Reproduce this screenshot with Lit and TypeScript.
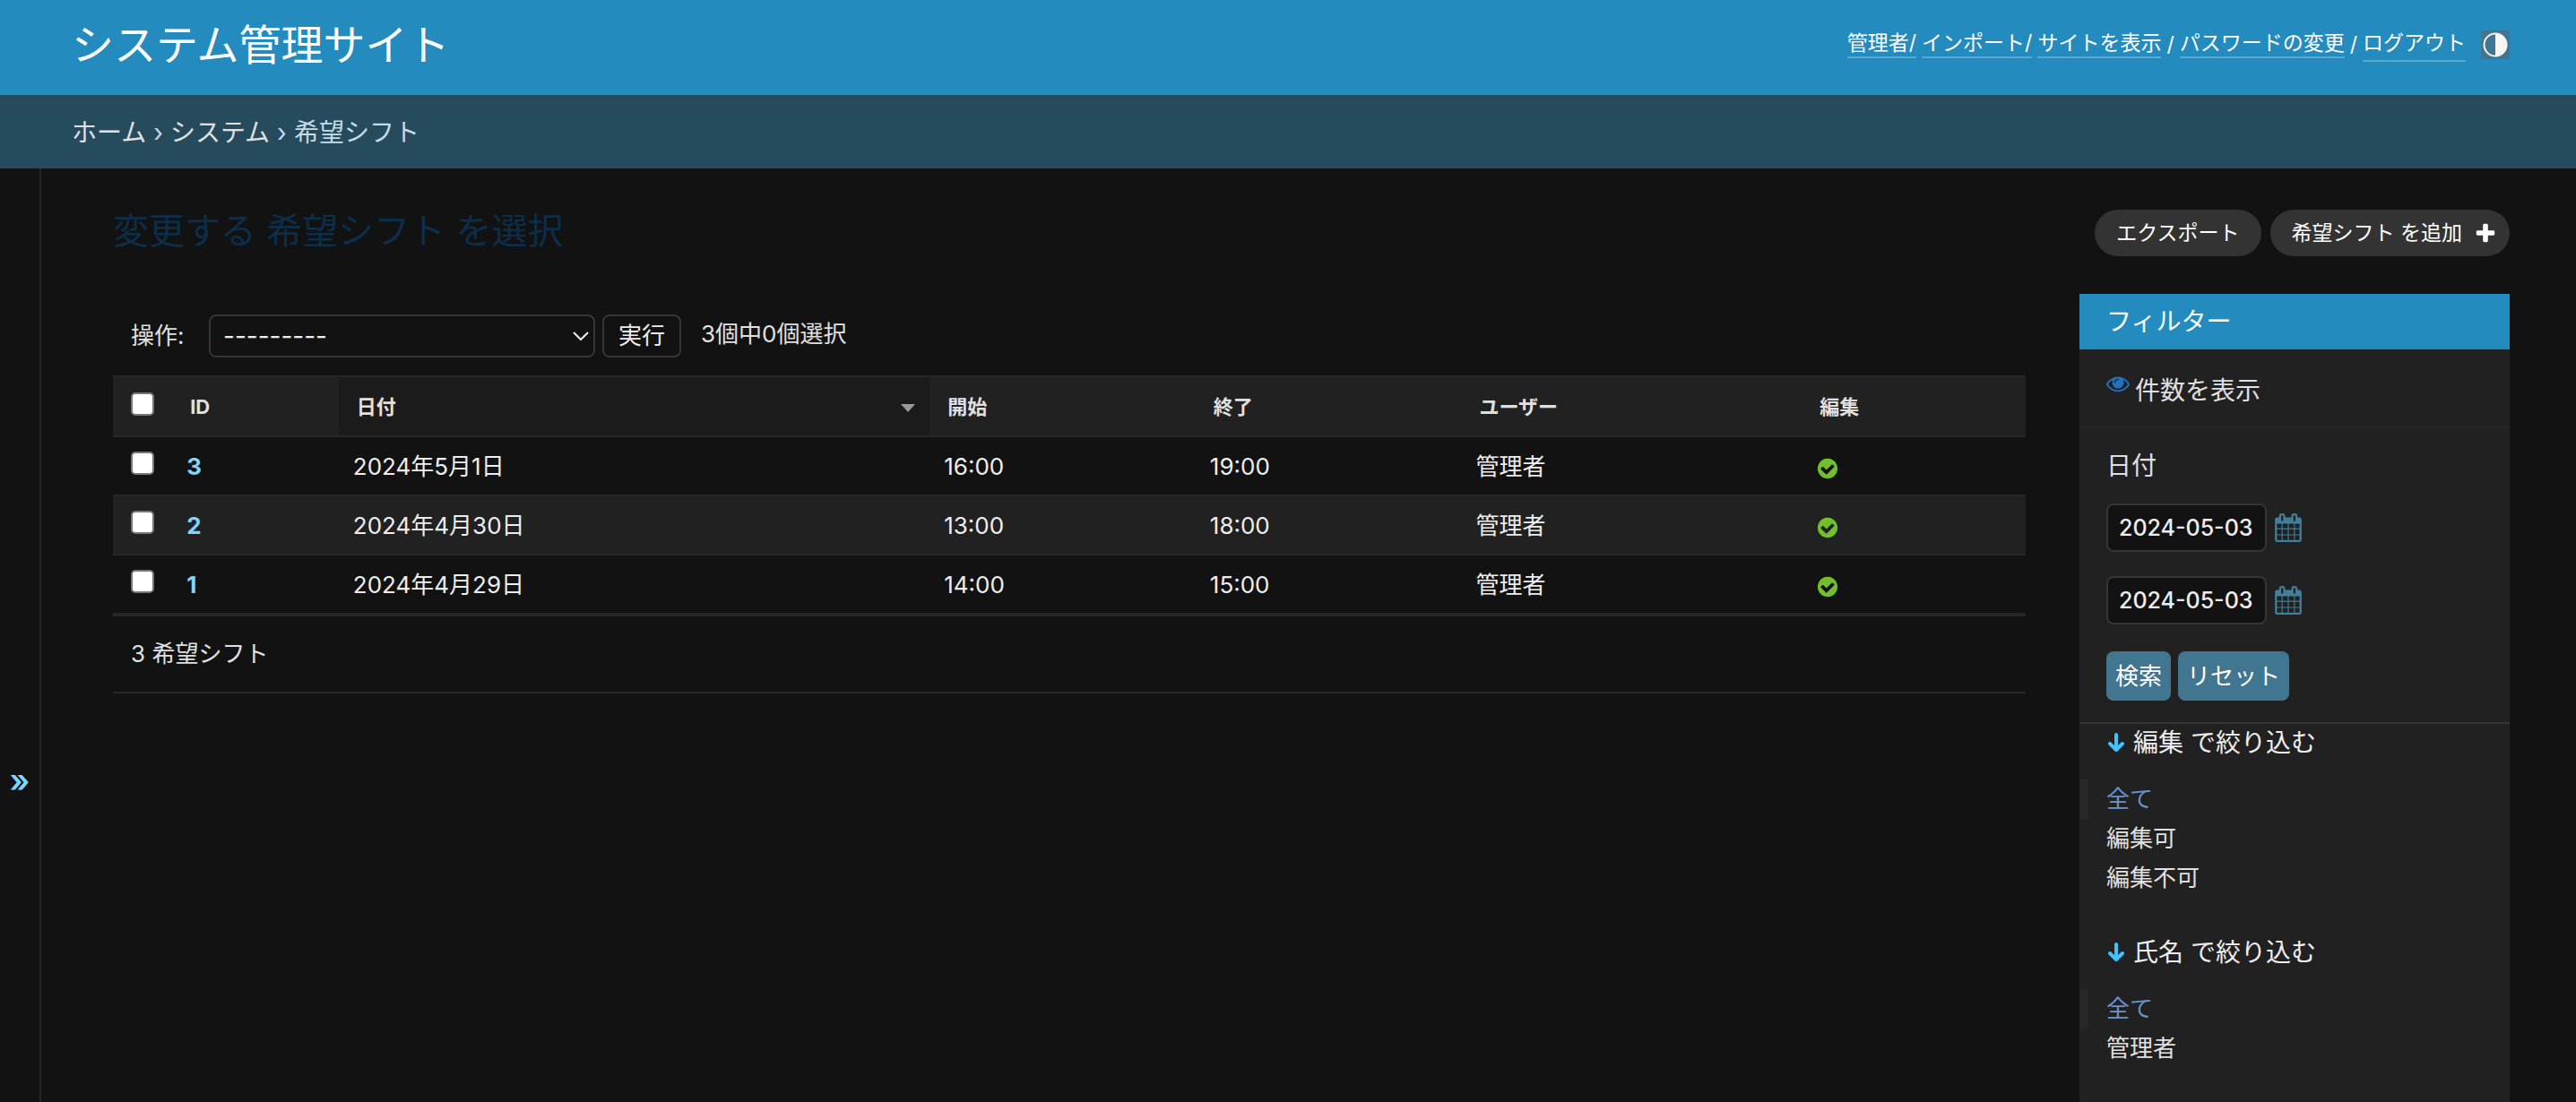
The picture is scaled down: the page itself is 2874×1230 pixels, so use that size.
import { LitElement, html, css, svg } from "lit";
import { customElement, property, state } from "lit/decorators.js";
import { classMap } from "lit/directives/class-map.js";

const ICONS = {
  calendar:
    "M192 1664h288v-288h-288v288zm352 0h320v-288h-320v288zm-352-352h288v-320h-288v320zm352 0h320v-320h-320v320zm-352-384h288v-288h-288v288zm736 736h320v-288h-320v288zm-384-736h320v-288h-320v288zm768 736h288v-288h-288v288zm-384-352h320v-320h-320v320zm-352-864v-288q0-13-9.5-22.5t-22.5-9.5h-64q-13 0-22.5 9.5t-9.5 22.5v288q0 13 9.5 22.5t22.5 9.5h64q13 0 22.5-9.5t9.5-22.5zm736 864h288v-320h-288v320zm-384-384h320v-288h-320v288zm384 0h288v-288h-288v288zm32-480v-288q0-13-9.5-22.5t-22.5-9.5h-64q-13 0-22.5 9.5t-9.5 22.5v288q0 13 9.5 22.5t22.5 9.5h64q13 0 22.5-9.5t9.5-22.5zm384-64v1280q0 52-38 90t-90 38h-1408q-52 0-90-38t-38-90v-1280q0-52 38-90t90-38h128v-96q0-66 47-113t113-47h64q66 0 113 47t47 113v96h384v-96q0-66 47-113t113-47h64q66 0 113 47t47 113v96h128q52 0 90 38t38 90z",
  check:
    "M1412 734q0-28-18-46l-91-90q-19-19-45-19t-45 19l-408 407-226-226q-19-19-45-19t-45 19l-91 90q-18 18-18 46 0 27 18 45l362 362q19 19 45 19 27 0 46-19l543-543q18-18 18-45zm252 162q0 209-103 385.5t-279.5 279.5-385.5 103-385.5-103-279.5-279.5-103-385.5 103-385.5 279.5-279.5 385.5-103 385.5 103 279.5 279.5 103 385.5z",
  plus: "M1600 796v192q0 40-28 68t-68 28h-416v416q0 40-28 68t-68 28h-192q-40 0-68-28t-28-68v-416h-416q-40 0-68-28t-28-68v-192q0-40 28-68t68-28h416v-416q0-40 28-68t68-28h192q40 0 68 28t28 68v416h416q40 0 68 28t28 68z",
  eye: "M1664 960q-152-236-381-353 61 104 61 225 0 185-131.5 316.5t-316.5 131.5-316.5-131.5-131.5-316.5q0-121 61-225-229 117-381 353 133 205 333.5 326.5t434.5 121.5 434.5-121.5 333.5-326.5zm-720-384q0-20-14-34t-34-14q-125 0-214.5 89.5t-89.5 214.5q0 20 14 34t34 14 34-14 14-34q0-86 61-147t147-61q20 0 34-14t14-34zm848 384q0 34-20 69-140 230-376.5 368.5t-499.5 138.5-499.5-139-376.5-368q-20-35-20-69t20-69q140-229 376.5-368t499.5-139 499.5 139 376.5 368q20 35 20 69z",
};

const icon = (name: keyof typeof ICONS, viewBox = "0 0 1792 1792") =>
  html`<svg class="icon ${name}" viewBox=${viewBox} aria-hidden="true">${svg`<path d=${ICONS[name]} />`}</svg>`;

const base = css`
  *,
  *::before,
  *::after {
    box-sizing: border-box;
  }
  a {
    color: inherit;
    text-decoration: none;
  }
  h1,
  h2,
  p,
  ul,
  ol {
    margin: 0;
    padding: 0;
    font-weight: 400;
    list-style: none;
  }
  button,
  input,
  select {
    margin: 0;
    font: inherit;
    color: inherit;
  }
  button {
    cursor: pointer;
  }
  .icon {
    display: block;
    fill: currentColor;
    flex: none;
  }
`;

@customElement("site-header")
export class SiteHeader extends LitElement {
  static styles = [
    base,
    css`
      :host {
        display: flex;
        align-items: center;
        justify-content: space-between;
        height: 106px;
        padding: 0 74px 6px 80px;
        background: #248bbf;
        color: #fff;
      }
      .title {
        font-size: 47px;
        line-height: 60px;
      }
      .tools {
        display: flex;
        align-items: center;
        gap: 6px;
        font-size: 23px;
        line-height: 26px;
      }
      .link {
        border-bottom: 2px solid #5aa8d0;
        padding-bottom: 2px;
      }
      .logout {
        border: 0;
        border-bottom: 2px solid #5aa8d0;
        background: none;
        padding: 4px 0 6px;
      }
      .theme {
        width: 32px;
        height: 32px;
        margin-left: 11px;
        padding: 2px;
        border: 0;
        background: #417690;
      }
      .theme-icon {
        display: block;
        width: 28px;
        height: 28px;
      }
    `,
  ];
  render() {
    return html`
      <h1 class="title"><a href="#">システム管理サイト</a></h1>
      <nav class="tools">
        <a class="link" href="#">管理者/</a>
        <a class="link" href="#">インポート/</a>
        <a class="link" href="#">サイトを表示</a>
        <span>/</span>
        <a class="link" href="#">パスワードの変更</a>
        <span>/</span>
        <button class="logout">ログアウト</button>
        <button class="theme" aria-label="テーマ">
          <svg class="theme-icon" viewBox="0 0 28 28">
            <circle cx="14" cy="14" r="12.5" fill="none" stroke="#f5f5f5" stroke-width="2" />
            <path d="M14 1a13 13 0 0 1 0 26z" fill="#f5f5f5" />
          </svg>
        </button>
      </nav>
    `;
  }
}

interface Shift {
  id: number;
  date: string;
  start: string;
  end: string;
  user: string;
}

@customElement("shift-list")
export class ShiftList extends LitElement {
  @property({ attribute: false }) shifts: Shift[] = [];
  @state() private selected = new Set<number>();

  static styles = [
    base,
    css`
      :host {
        display: block;
      }
      .actions {
        display: flex;
        align-items: center;
        gap: 8px;
        height: 48px;
        margin: 23px 0 20px;
        padding-left: 20px;
        line-height: 40px;
      }
      .label {
        width: 79px;
      }
      .select-box {
        display: grid;
        align-items: center;
        width: 431px;
      }
      .select,
      .chevron {
        grid-area: 1 / 1;
      }
      .select {
        width: 100%;
        height: 48px;
        padding: 0 14px;
        appearance: none;
        border: 2px solid #353535;
        border-radius: 8px;
        background: #121212;
        color: #eee;
        font-size: 28px;
      }
      .chevron {
        justify-self: end;
        width: 18px;
        height: 12px;
        margin-right: 7px;
        pointer-events: none;
        fill: none;
        stroke: #eee;
        stroke-width: 2;
      }
      .run {
        height: 48px;
        padding: 0 16px;
        border: 2px solid #353535;
        border-radius: 8px;
        background: #121212;
        color: #eee;
      }
      .counter {
        padding: 0 14px 4px;
      }
      .table {
        width: 100%;
        table-layout: fixed;
        border-collapse: separate;
        border-spacing: 0;
      }
      .c-check {
        width: 3.1%;
      }
      .c-id {
        width: 8.7%;
      }
      .c-date {
        width: 30.9%;
      }
      .c-time {
        width: 13.9%;
      }
      .c-user {
        width: 17.8%;
      }
      .head,
      .cell {
        padding: 0 16px;
        border-bottom: 2px solid #272727;
        text-align: left;
        vertical-align: middle;
        font-weight: 400;
      }
      .head {
        height: 69px;
        padding: 0 20px;
        border-top: 2px solid #272727;
        background: #212121;
        font-size: 22px;
        font-weight: 700;
        color: #e0e0e0;
      }
      .sorted {
        background: #1b1b1b;
        padding-right: 16px;
      }
      .sort {
        display: flex;
        align-items: center;
        justify-content: space-between;
      }
      .arrow {
        width: 16px;
        height: 9px;
        margin-top: 4px;
        fill: #999;
      }
      .cell {
        height: 66px;
        padding-top: 2px;
        color: #eee;
        line-height: 40px;
      }
      .cell.pick,
      .head.pick {
        padding: 0 0 6px 20px;
      }
      .row:nth-child(even) .cell {
        background: #212121;
      }
      .id {
        font-weight: 700;
        color: #81d4fa;
      }
      .box {
        display: block;
        width: 26px;
        height: 26px;
        appearance: none;
        border: 2px solid #767676;
        border-radius: 5px;
        background: #fff;
      }
      .box:checked {
        background: #248bbf;
      }
      .check {
        width: 26px;
        height: 26px;
        margin-top: 4px;
        fill: #70bf2b;
      }
      .paginator {
        height: 88px;
        padding: 0 20px;
        border-top: 2px solid #272727;
        border-bottom: 2px solid #272727;
        line-height: 84px;
      }
    `,
  ];

  private toggle(id: number) {
    const next = new Set(this.selected);
    if (!next.delete(id)) next.add(id);
    this.selected = next;
  }

  private toggleAll(e: Event) {
    const on = (e.target as HTMLInputElement).checked;
    this.selected = new Set(on ? this.shifts.map((s) => s.id) : []);
  }

  render() {
    return html`
      <div class="actions">
        <label class="label" for="action">操作:</label>
        <div class="select-box">
          <select class="select" id="action">
            <option>---------</option>
          </select>
          <svg class="chevron" viewBox="0 0 18 12"><path d="M1 2l8 8 8-8" /></svg>
        </div>
        <button class="run">実行</button>
        <span class="counter">${this.shifts.length}個中${this.selected.size}個選択</span>
      </div>
      <table class="table">
        <colgroup>
          <col class="c-check" />
          <col class="c-id" />
          <col class="c-date" />
          <col class="c-time" />
          <col class="c-time" />
          <col class="c-user" />
          <col />
        </colgroup>
        <thead>
          <tr>
            <th class="head pick">
              <input class="box" type="checkbox" aria-label="全て選択" @change=${this.toggleAll} />
            </th>
            <th class="head"><a href="#">ID</a></th>
            <th class="head sorted">
              <a class="sort" href="#"
                >日付<svg class="arrow" viewBox="0 0 16 9"><path d="M0 0h16l-8 9z" /></svg
              ></a>
            </th>
            <th class="head"><a href="#">開始</a></th>
            <th class="head"><a href="#">終了</a></th>
            <th class="head"><a href="#">ユーザー</a></th>
            <th class="head"><a href="#">編集</a></th>
          </tr>
        </thead>
        <tbody>
          ${this.shifts.map(
            (s) => html`<tr class="row">
              <td class="cell pick">
                <input
                  class="box"
                  type="checkbox"
                  aria-label=${s.id}
                  .checked=${this.selected.has(s.id)}
                  @change=${() => this.toggle(s.id)}
                />
              </td>
              <th class="cell"><a class="id" href="#">${s.id}</a></th>
              <td class="cell">${s.date}</td>
              <td class="cell">${s.start}</td>
              <td class="cell">${s.end}</td>
              <td class="cell">${s.user}</td>
              <td class="cell">${icon("check")}</td>
            </tr>`
          )}
        </tbody>
      </table>
      <p class="paginator">${this.shifts.length} 希望シフト</p>
    `;
  }
}

@customElement("filter-panel")
export class FilterPanel extends LitElement {
  private groups = [
    { title: "編集", items: ["全て", "編集可", "編集不可"] },
    { title: "氏名", items: ["全て", "管理者"] },
  ];

  static styles = [
    base,
    css`
      :host {
        display: block;
        background: #212121;
        color: #e0e0e0;
      }
      .title {
        padding: 0 30px;
        background: #248bbf;
        color: #fff;
        font-size: 28px;
        line-height: 62px;
      }
      .facets {
        display: flex;
        gap: 6px;
        padding: 25px 30px 19px;
        border-bottom: 2px solid #272727;
        font-size: 28px;
        line-height: 42px;
      }
      .eye {
        width: 26px;
        height: 26px;
        color: #2470c0;
      }
      .dates {
        display: grid;
        gap: 27px;
        padding: 22px 30px 24px;
        border-bottom: 2px solid #353535;
      }
      .caption {
        font-size: 28px;
        line-height: 40px;
        margin-bottom: -5px;
      }
      .field {
        display: flex;
        align-items: center;
        gap: 9px;
      }
      .date {
        width: 179px;
        height: 54px;
        padding: 0 8px 0 12px;
        border: 2px solid #353535;
        border-radius: 8px;
        background: #121212;
        color: #eee;
        font-size: 25px;
        font-weight: 500;
      }
      .pick {
        padding: 0;
        border: 0;
        background: none;
        color: #417f9b;
      }
      .calendar {
        width: 30px;
        height: 32px;
      }
      .buttons {
        display: flex;
        gap: 8px;
        padding-top: 3px;
      }
      .button {
        height: 55px;
        padding: 0 10px;
        border: 0;
        border-radius: 8px;
        background: #417690;
        color: #fff;
      }
      .group {
        margin-bottom: 40px;
      }
      .summary {
        display: flex;
        align-items: center;
        gap: 8px;
        padding: 0 30px;
        margin-bottom: 20px;
        font-size: 28px;
        line-height: 42px;
        color: #eee;
      }
      .down {
        width: 22px;
        height: 22px;
        fill: none;
        stroke: #40c4ff;
        stroke-width: 4;
        stroke-linecap: round;
        stroke-linejoin: round;
      }
      .item {
        padding: 0 20px;
        border-left: 10px solid transparent;
        line-height: 44px;
      }
      .item.selected {
        border-color: #272727;
        color: #6b93c9;
      }
    `,
  ];

  private dateField(id: string) {
    return html`<div class="field">
      <input class="date" id=${id} type="text" value="2024-05-03" aria-label="日付" />
      <button class="pick" type="button" aria-label="カレンダー">${icon("calendar", "64 0 1664 1792")}</button>
    </div>`;
  }

  render() {
    return html`
      <h2 class="title">フィルター</h2>
      <a class="facets" href="#">${icon("eye")}<span>件数を表示</span></a>
      <form class="dates" @submit=${(e: Event) => e.preventDefault()}>
        <label class="caption" for="date-from">日付</label>
        ${this.dateField("date-from")} ${this.dateField("date-to")}
        <div class="buttons">
          <button class="button" type="submit">検索</button>
          <button class="button" type="reset">リセット</button>
        </div>
      </form>
      ${this.groups.map(
        (g) => html`<details class="group" open>
          <summary class="summary">
            <svg class="down" viewBox="0 0 22 22"><path d="M11 2v17M4 12l7 7 7-7" /></svg>
            <span>${g.title} で絞り込む</span>
          </summary>
          <ul>
            ${g.items.map(
              (t, i) => html`<li class=${classMap({ item: true, selected: i === 0 })}><a href="#">${t}</a></li>`
            )}
          </ul>
        </details>`
      )}
    `;
  }
}

@customElement("app-root")
export class AppRoot extends LitElement {
  private shifts: Shift[] = [
    { id: 3, date: "2024年5月1日", start: "16:00", end: "19:00", user: "管理者" },
    { id: 2, date: "2024年4月30日", start: "13:00", end: "18:00", user: "管理者" },
    { id: 1, date: "2024年4月29日", start: "14:00", end: "15:00", user: "管理者" },
  ];

  static styles = [
    base,
    css`
      :host {
        display: flex;
        flex-direction: column;
        min-height: 100vh;
        background: #121212;
        color: #e0e0e0;
        font-family: Inter, "Noto Sans CJK JP", sans-serif;
        font-size: 26px;
        line-height: 40px;
      }
      .crumbs {
        display: flex;
        gap: 8px;
        height: 82px;
        padding: 0 80px;
        background: #264b5d;
        color: #c4dce8;
        font-size: 28px;
        line-height: 84px;
      }
      .crumb {
        color: #e0e0e0;
      }
      .main {
        display: flex;
        flex: 1;
      }
      .toggle {
        width: 46px;
        padding: 658px 0 0;
        border: 0;
        border-right: 2px solid #272727;
        background: none;
        color: #81d4fa;
        font-size: 36px;
        font-weight: 600;
        line-height: 50px;
        align-self: stretch;
        display: flex;
        justify-content: center;
      }
      .content {
        display: flex;
        flex-direction: column;
        flex: 1;
        min-width: 0;
        padding: 40px 74px 0 80px;
      }
      .top {
        display: flex;
        align-items: flex-start;
        justify-content: space-between;
        height: 60px;
        margin-bottom: 40px;
      }
      .heading {
        font-size: 40px;
        line-height: 60px;
        color: #0c2e48;
      }
      .tools {
        display: flex;
        gap: 10px;
        padding-top: 6px;
      }
      .pill {
        display: flex;
        align-items: center;
        gap: 13px;
        height: 52px;
        padding: 0 24px;
        border-radius: 26px;
        background: #333;
        color: #fff;
        font-size: 23px;
      }
      .pill.add {
        padding-right: 14px;
      }
      .plus {
        width: 26px;
        height: 26px;
      }
      .columns {
        display: flex;
        flex: 1;
        gap: 60px;
      }
      .list {
        flex: 1;
        min-width: 0;
      }
      .filter {
        flex: 0 0 480px;
      }
    `,
  ];

  render() {
    return html`
      <site-header></site-header>
      <nav class="crumbs">
        <a class="crumb" href="#">ホーム</a><span>›</span><a class="crumb" href="#">システム</a><span>›</span
        ><span>希望シフト</span>
      </nav>
      <div class="main">
        <button class="toggle" aria-label="ナビゲーション">»</button>
        <main class="content">
          <div class="top">
            <h1 class="heading">変更する 希望シフト を選択</h1>
            <div class="tools">
              <a class="pill" href="#">エクスポート</a>
              <a class="pill add" href="#">希望シフト を追加${icon("plus")}</a>
            </div>
          </div>
          <div class="columns">
            <shift-list class="list" .shifts=${this.shifts}></shift-list>
            <filter-panel class="filter"></filter-panel>
          </div>
        </main>
      </div>
    `;
  }
}
